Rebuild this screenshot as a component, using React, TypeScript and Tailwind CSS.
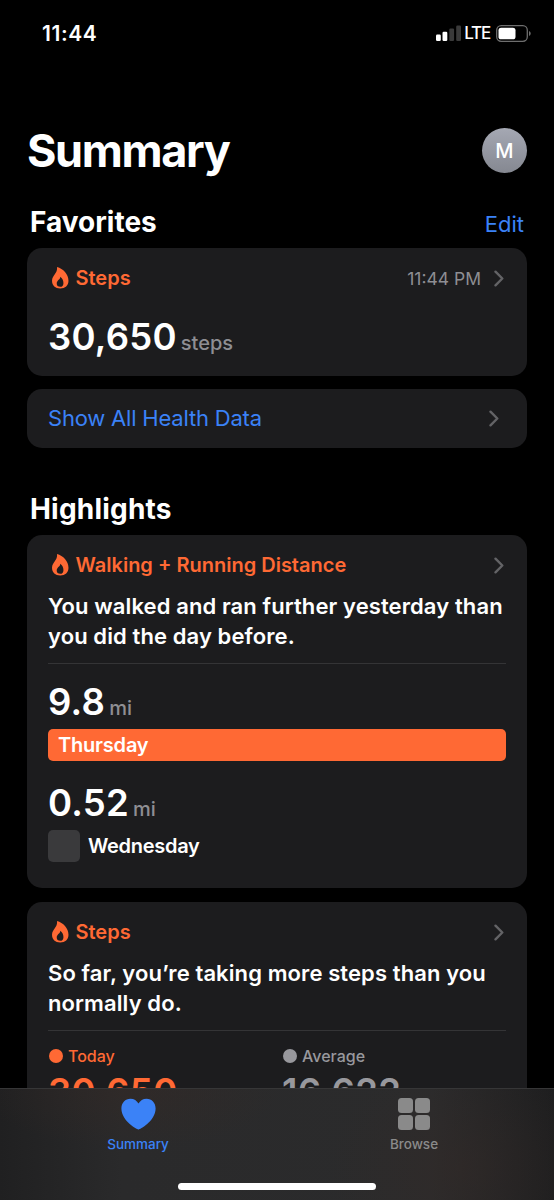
import React from 'react';
import clsx from 'clsx';

interface CardHeaderProps {
    title: string;
    time?: string;
}

interface AmountProps {
    value: string;
    unit: string;
}

interface StatProps {
    label: string;
    value: string;
    active?: boolean;
}

function Flame() {
    return (
        <svg className="w-[16.500px] h-[21.500px] shrink-0" viewBox="0 0 49 64" fill="#ff6934">
            <path
                fillRule="evenodd"
                d="M15 0C33 5 49 21 49 41C49 55 39 64 24.500 64C10 64 0 55 0 41C0 24 17 20 15 0ZM24 29C26 37 14 39 14 49C14 55 18 59 24.500 59C30 59 34 55 34 48C34 40 31 33 24 29Z"
            />
        </svg>
    );
}

function Chevron() {
    return (
        <svg className="w-[10px] h-[17px] shrink-0" viewBox="0 0 10 17" fill="none" stroke="#636366" strokeWidth="2.4" strokeLinecap="round" strokeLinejoin="round">
            <path d="M1.500 1.700L8.300 8.500L1.500 15.300"/>
        </svg>
    );
}

function CardHeader({title, time}: CardHeaderProps) {
    return (
        <div className="flex h-[22px] items-center pl-1 pr-[2px]">
            <Flame/>
            <h3 className="ml-[7px] text-[20px] font-[560] leading-[22px] text-[#ff6934]">{title}</h3>
            <div className="ml-auto flex items-center gap-[13px]">
                {time && <span className="pt-[2px] text-[17.5px] leading-[22px] text-[#8e8e93]">{time}</span>}
                <Chevron/>
            </div>
        </div>
    );
}

function Amount({value, unit}: AmountProps) {
    return (
        <div className="flex items-baseline gap-1 leading-[44px]">
            <span className="text-[36.5px] font-[560] tracking-[0.25px] text-white">{value}</span>
            <span className="text-[20px] font-medium text-[#8e8e93]">{unit}</span>
        </div>
    );
}

function Stat({label, value, active}: StatProps) {
    return (
        <div className={clsx(active ? 'text-[#ff6934]' : 'text-[#98989d]')}>
            <div className="flex h-5 items-center gap-[5px] pl-px text-[16px] font-[540]">
                <span className="size-[14px] rounded-full bg-current"/>
                {label}
            </div>
            <div className="mt-1 text-[36.5px] font-[560] leading-[44px] tracking-[0.4px]">{value}</div>
        </div>
    );
}

function StatusBar() {
    return (
        <div className="flex h-[66px] shrink-0 items-center justify-between pl-[42px] pr-[23px]">
            <span className="pt-px text-[21px] font-[560] tracking-[0.6px]">11:44</span>
            <div className="flex items-center">
                <svg className="w-[25px] h-4" viewBox="0 0 25 16">
                    <rect x="0" y="9.500" width="4.800" height="6.500" rx="1.2" fill="#fff"/>
                    <rect x="6.500" y="6.800" width="4.800" height="9.200" rx="1.2" fill="#fff"/>
                    <rect x="13.300" y="3.500" width="4.800" height="12.500" rx="1.2" fill="#3a3a3a"/>
                    <rect x="20.200" y="0.500" width="4.800" height="15.500" rx="1.2" fill="#3a3a3a"/>
                </svg>
                <span className="ml-[3px] pt-px text-[17px] font-medium tracking-[-1.2px]">LTE</span>
                <svg className="ml-[6px] w-[35px] h-[17px]" viewBox="0 0 35 17">
                    <rect x="0.700" y="0.700" width="30.600" height="15.600" rx="4.500" fill="none" stroke="#6e6e6e" strokeWidth="1.300"/>
                    <rect x="2.500" y="2.700" width="17" height="11.600" rx="2.600" fill="#fff"/>
                    <path d="M33 6v5c1-.4 1.700-1.400 1.700-2.500S34 6.400 33 6z" fill="#6e6e6e"/>
                </svg>
            </div>
        </div>
    );
}

function TabBar() {
    return (
        <nav className="flex h-[112px] shrink-0 flex-col items-center border-t border-[#363637] bg-[radial-gradient(ellipse_150px_60px_at_130px_0px,#35292580,transparent),radial-gradient(ellipse_130px_110px_at_460px_80px,#342a2780,transparent),linear-gradient(to_right,#202021,#2a2a2b_22%,#2b2b2c_78%,#1e1e1f)]">
            <div className="grid h-[94px] w-full grid-cols-2 pr-[2px] text-[13.5px] font-medium">
                <div className="flex flex-col items-center text-[#3b82f7]">
                    <svg className="mt-[9px] w-[35px] h-8" viewBox="0 0 35 32" fill="currentColor">
                        <path d="M17.500 31.500C16.300 31.500 0.400 23 0.400 10.500C0.400 4.800 4.300 0.700 9.400 0.700C13 0.700 16 2.700 17.500 5.600C19 2.700 22 0.700 25.600 0.700C30.700 0.700 34.600 4.800 34.600 10.500C34.600 23 18.700 31.500 17.500 31.500Z"/>
                    </svg>
                    <span className="mt-1">Summary</span>
                </div>
                <div className="flex flex-col items-center text-[#8a8a8a]">
                    <div className="mt-[9px] grid grid-cols-2 gap-[2px]">
                        {[0, 1, 2, 3].map((tile) => (
                            <span key={tile} className="size-[15px] rounded-[3.5px] bg-current"/>
                        ))}
                    </div>
                    <span className="mt-1">Browse</span>
                </div>
            </div>
            <div className="h-[7px] w-[198px] rounded-full bg-white"/>
        </nav>
    );
}

export default function App() {
    return (
        <div className="flex h-[1200px] w-[554px] flex-col overflow-hidden bg-black font-['Inter',sans-serif] text-white">
            <StatusBar/>

            <main className="flex min-h-0 flex-1 flex-col overflow-hidden px-[27px]">
                <header className="mt-[61px] flex h-[46px] shrink-0 items-center justify-between">
                    <h1 className="pt-[2px] text-[45px] font-bold leading-[46px] tracking-[-1.35px]">Summary</h1>
                    <div className="flex size-[45px] items-center justify-center rounded-full bg-linear-to-b from-[#a5a8b3] to-[#858891] pt-px text-[20px] font-medium">M</div>
                </header>

                <div className="mt-[30px] flex h-9 shrink-0 items-center justify-between px-[3px]">
                    <h2 className="pt-[2px] text-[28px] font-[680]">Favorites</h2>
                    <button className="pt-[6px] text-[22px] text-[#3b82f7]">Edit</button>
                </div>

                <section className="mt-[9px] h-32 shrink-0 rounded-[15px] bg-[#1c1c1e] px-[21px] pt-[19px]">
                    <CardHeader title="Steps" time="11:44 PM"/>
                    <div className="mt-[26px]">
                        <Amount value="30,650" unit="steps"/>
                    </div>
                </section>

                <button className="mt-[13px] flex h-[59px] shrink-0 items-center justify-between rounded-[15px] bg-[#1c1c1e] pl-[21px] pr-[28px] text-[22px] tracking-[-0.2px] text-[#3b82f7]">
                    Show All Health Data
                    <Chevron/>
                </button>

                <h2 className="mt-[43px] h-9 shrink-0 pl-[3px] text-[28px] font-[680] leading-9 tracking-[0.2px]">Highlights</h2>

                <section className="mt-2 h-[353px] shrink-0 rounded-[15px] bg-[#1c1c1e] px-[21px] pt-[19px]">
                    <CardHeader title="Walking + Running Distance"/>
                    <p className="mt-4 whitespace-nowrap text-[22px] font-[560] leading-[29.5px] tracking-[0.1px]">
                        You walked and ran further yesterday than<br/>you did the day before.
                    </p>
                    <div className="mt-3 h-px bg-[#343436]"/>
                    <div className="mt-4">
                        <Amount value="9.8" unit="mi"/>
                        <div className="-mt-px flex h-8 items-center rounded-[5px] bg-[#ff6934] pl-[10px] text-[20px] font-[560] tracking-[-0.2px]">Thursday</div>
                    </div>
                    <div className="mt-5">
                        <Amount value="0.52" unit="mi"/>
                        <div className="-mt-px flex items-center gap-2 text-[20px] font-[560] tracking-[-0.3px]">
                            <span className="size-8 rounded-[5px] bg-[#3a3a3c]"/>
                            Wednesday
                        </div>
                    </div>
                </section>

                <section className="mt-[14px] h-[353px] shrink-0 rounded-[15px] bg-[#1c1c1e] px-[21px] pt-[19px]">
                    <CardHeader title="Steps"/>
                    <p className="mt-4 whitespace-nowrap text-[22px] font-[560] leading-[29.5px] tracking-[0.1px]">
                        So far, you’re taking more steps than you<br/>normally do.
                    </p>
                    <div className="mt-3 h-px bg-[#343436]"/>
                    <div className="mt-[15px] grid grid-cols-[234px_1fr]">
                        <Stat label="Today" value="30,650" active/>
                        <Stat label="Average" value="16,622"/>
                    </div>
                </section>
            </main>

            <TabBar/>
        </div>
    );
}
